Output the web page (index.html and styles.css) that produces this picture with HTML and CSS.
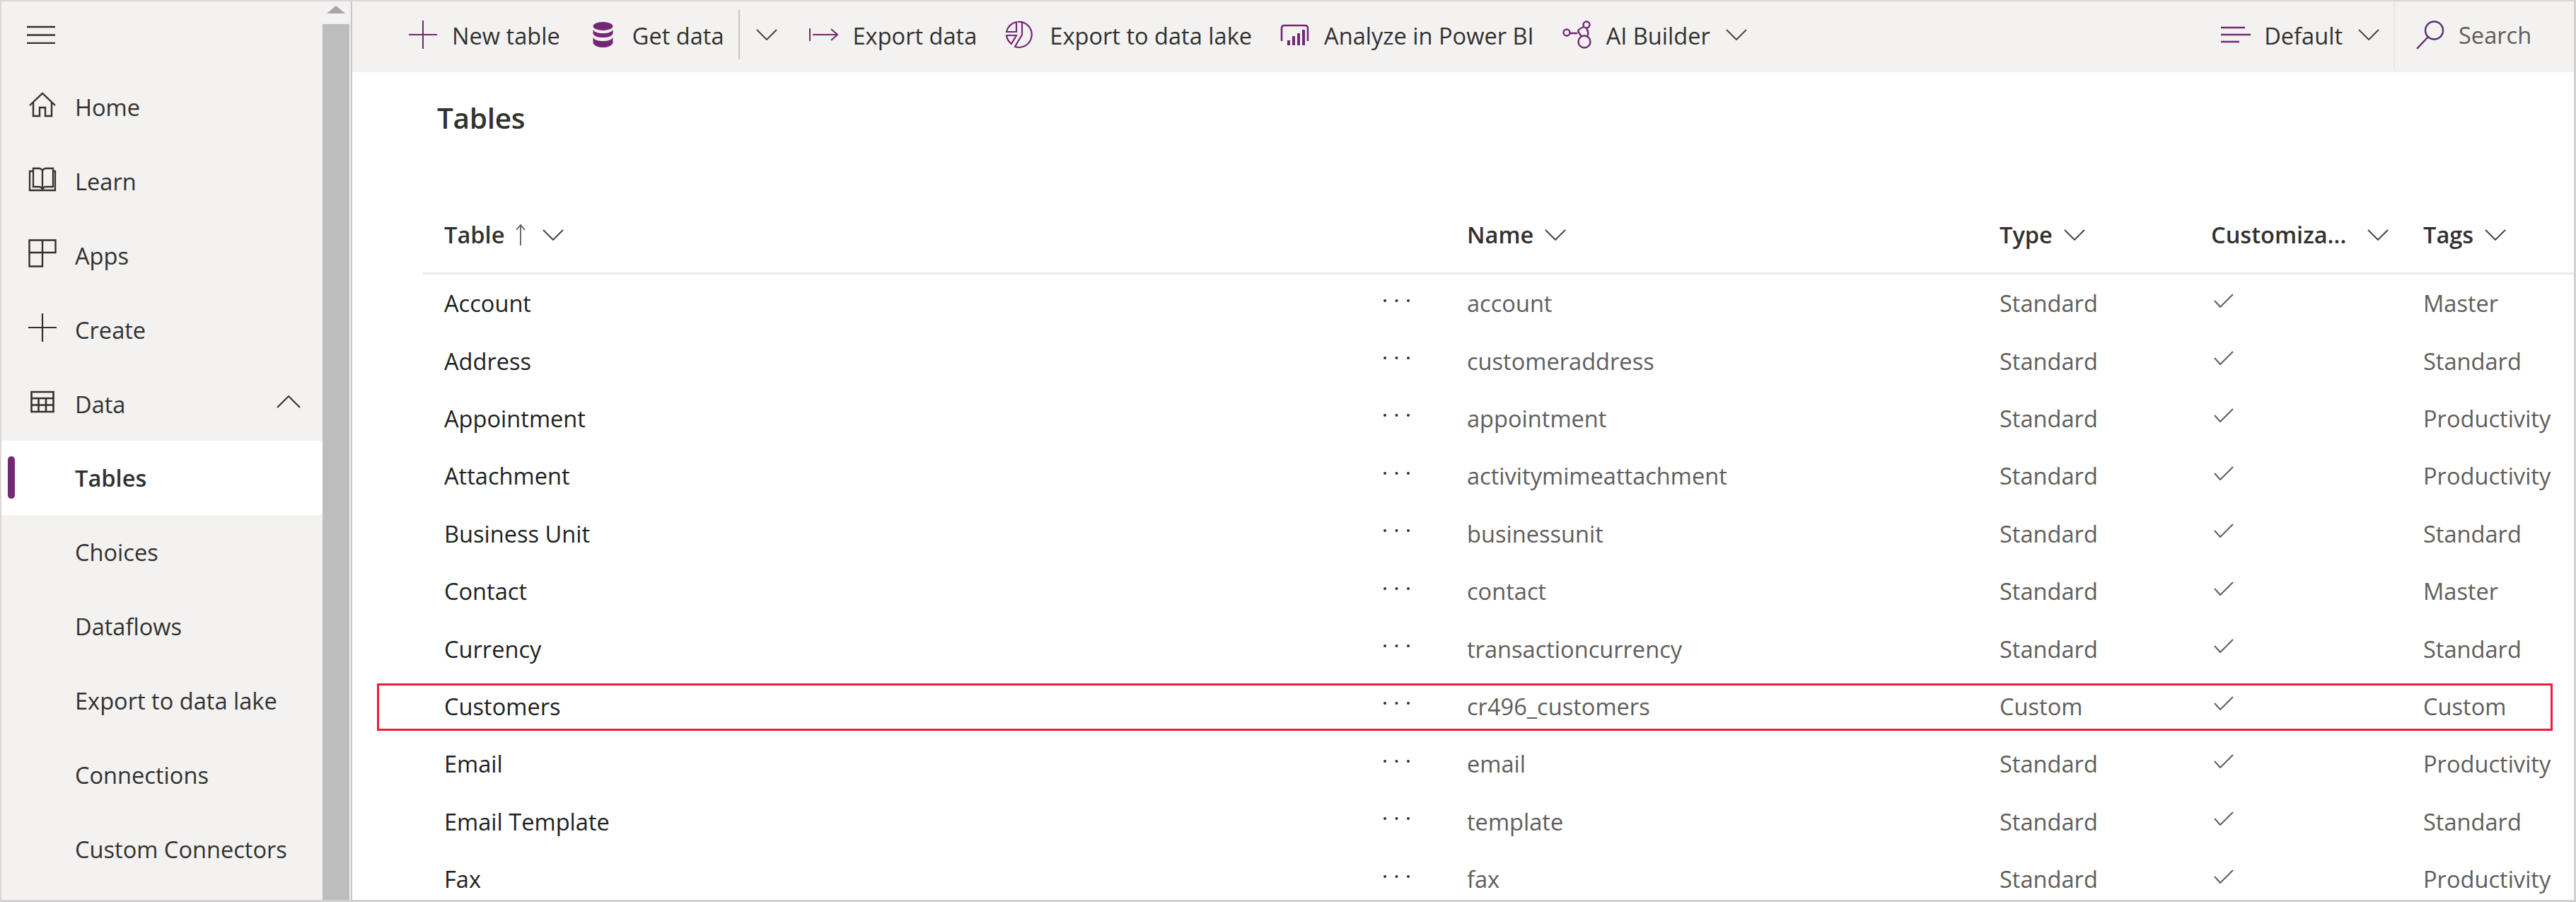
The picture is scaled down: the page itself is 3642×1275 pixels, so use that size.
FILE: index.html
```html
<!DOCTYPE html>
<html lang="en">
<head>
    <meta charset="UTF-8">
    <title>Tables</title>
    <link rel="stylesheet" href="styles.css">
</head>
<body>
<svg class="defs" width="0" height="0">
    <symbol id="chev" viewBox="0 0 30 16"><path d="M1 1 L15 15 L29 1" fill="none" stroke="currentColor" stroke-width="2"/></symbol>
    <symbol id="check" viewBox="0 0 28 20"><path d="M1 10 L9 19 L27 1" fill="none" stroke="currentColor" stroke-width="2"/></symbol>
    <symbol id="dots" viewBox="0 0 37 4"><circle cx="2" cy="2" r="2"/><circle cx="18.5" cy="2" r="2"/><circle cx="35" cy="2" r="2"/></symbol>
</svg>
<div class="app">
    <aside class="side">
        <nav class="nav">
            <div class="burger">
                <svg width="40" height="26" viewBox="0 0 40 26"><path d="M0 2H40M0 13.500H40M0 25H40" stroke="#323130" stroke-width="2.600"/></svg>
            </div>
            <a class="nav-item">
                <svg class="nav-icon" width="40" height="36" viewBox="0 0 40 36"><path d="M2 19 L20 2 L38 19M7 15V34H16V22H24V34H33V15" fill="none" stroke="#323130" stroke-width="2.400"/></svg>
                Home
            </a>
            <a class="nav-item">
                <svg class="nav-icon" width="40" height="36" viewBox="0 0 40 36"><path d="M7 3V29H15Q18 29 20 32Q22 29 25 29H35V3H25Q22 3 20 6Q18 3 15 3ZM20 6V32M7 7H2V34H38V7H35" fill="none" stroke="#323130" stroke-width="2.300"/></svg>
                Learn
            </a>
            <a class="nav-item">
                <svg class="nav-icon" width="40" height="40" viewBox="0 0 40 40"><path d="M1.500 1.500H38.500V19H20V38.500H1.500ZM20 1.500V19H1.500" fill="none" stroke="#323130" stroke-width="2.400"/></svg>
                Apps
            </a>
            <a class="nav-item">
                <svg class="nav-icon" width="40" height="40" viewBox="0 0 40 40"><path d="M0 20H40M20 0V40" stroke="#323130" stroke-width="2.200"/></svg>
                Create
            </a>
            <a class="nav-item">
                <svg class="nav-icon" width="40" height="32" viewBox="0 0 40 32"><path d="M4.500 2H35.500V30H4.500ZM4.500 11H35.500M4.500 20.500H35.500M14.500 11V30M25 11V30" fill="none" stroke="#323130" stroke-width="2.600"/></svg>
                Data
                <svg class="nav-up" width="34" height="18" viewBox="0 0 34 18"><path d="M1 17 L17 1 L33 17" fill="none" stroke="#323130" stroke-width="2"/></svg>
            </a>
            <a class="nav-item sub current"><span class="mark"></span>Tables</a>
            <a class="nav-item sub">Choices</a>
            <a class="nav-item sub">Dataflows</a>
            <a class="nav-item sub">Export to data lake</a>
            <a class="nav-item sub">Connections</a>
            <a class="nav-item sub">Custom Connectors</a>
        </nav>
        <div class="scroll">
            <svg class="scroll-up" width="26" height="11" viewBox="0 0 26 11"><path d="M13 0 L26 11 H0Z" fill="#a6a6a6"/></svg>
            <div class="thumb"></div>
        </div>
    </aside>

    <main class="main">
        <header class="toolbar">
            <a class="tool">
                <svg width="40" height="40" viewBox="0 0 40 40"><path d="M0 20H40M20 0V40" stroke="#742774" stroke-width="2"/></svg>
                New table
            </a>
            <a class="tool tool-data">
                <svg width="29" height="36" viewBox="0 0 29 36" fill="#742774"><ellipse cx="14.500" cy="6" rx="14" ry="6"/><path d="M0.500 11C3 15 8 16 14.500 16S26 15 28.500 11V17C26 21 21 22 14.500 22S3 21 0.500 17Z"/><path d="M0.500 22C3 26 8 27 14.500 27S26 26 28.500 22V30C26 34 21 36 14.500 36S3 34 0.500 30Z"/></svg>
                Get data
            </a>
            <span class="tool-sep"></span>
            <svg class="chev tool-chev" width="30" height="16"><use href="#chev"/></svg>
            <a class="tool tool-near">
                <svg width="41" height="18" viewBox="0 0 41 18"><path d="M1 0V18M5 9H40M31 1 L40 9 L31 17" fill="none" stroke="#742774" stroke-width="2"/></svg>
                Export data
            </a>
            <a class="tool tool-near">
                <svg width="42" height="40" viewBox="0 0 42 40"><path d="M18 2A18 18 0 1 1 14 37L24 20V2ZM2 16A18 18 0 0 1 16 2V16ZM2 21H16L9 33A18 18 0 0 1 2 21Z" fill="none" stroke="#742774" stroke-width="2.200"/></svg>
                Export to data lake
            </a>
            <a class="tool tool-near">
                <svg width="41" height="30" viewBox="0 0 41 30"><path d="M2 24V6Q2 2 6 2H35Q39 2 39 6V24" fill="none" stroke="#742774" stroke-width="2.600"/><path d="M10 23h4v7h-4ZM17 17h4v13h-4ZM24 13h4v17h-4ZM31 8h4v22h-4Z" fill="#742774"/></svg>
                Analyze in Power BI
            </a>
            <a class="tool tool-ai">
                <svg width="42" height="40" viewBox="0 0 42 40" fill="none" stroke="#742774" stroke-width="2.400"><circle cx="6" cy="17" r="4.500"/><circle cx="34" cy="6" r="4.500"/><circle cx="31" cy="30" r="8.500"/><path d="M30 9Q20 13 23 17Q25 20 27 22M10 18H21M34 11Q38 17 35 23"/></svg>
                AI Builder
            </a>
            <svg class="chev" width="30" height="16"><use href="#chev"/></svg>
            <div class="tool-right">
                <a class="tool tool-default">
                    <svg width="42" height="24" viewBox="0 0 42 24"><path d="M0 2H34M0 12H42M0 22H26" stroke="#742774" stroke-width="2.600"/></svg>
                    Default
                </a>
                <svg class="chev tool-chev-def" width="30" height="16"><use href="#chev"/></svg>
                <div class="search">
                    <svg width="40" height="40" viewBox="0 0 40 40"><circle cx="25.500" cy="14" r="12.500" fill="none" stroke="#5c2d6e" stroke-width="2.400"/><path d="M17 23 L1 40" stroke="#5c2d6e" stroke-width="2.400"/></svg>
                    Search
                </div>
            </div>
        </header>

        <h1 class="title">Tables</h1>

        <section class="grid">
            <div class="row head">
                <div class="cell">Table
                    <svg class="sort" width="14" height="30" viewBox="0 0 14 30"><path d="M7 30V1M1 8 L7 1 L13 8" fill="none" stroke="#605e5c" stroke-width="1.800"/></svg>
                    <svg class="chev" width="30" height="16"><use href="#chev"/></svg>
                </div>
                <div></div>
                <div class="cell">Name <svg class="chev" width="30" height="16"><use href="#chev"/></svg></div>
                <div class="cell">Type <svg class="chev" width="30" height="16"><use href="#chev"/></svg></div>
                <div class="cell cell-wide">Customiza... <svg class="chev" width="30" height="16"><use href="#chev"/></svg></div>
                <div class="cell">Tags <svg class="chev" width="30" height="16"><use href="#chev"/></svg></div>
            </div>

            <div class="row">
                <div class="main-col">Account</div>
                <svg class="dots" width="37" height="4"><use href="#dots"/></svg>
                <div>account</div><div>Standard</div>
                <svg class="check" width="28" height="20"><use href="#check"/></svg>
                <div>Master</div>
            </div>
            <div class="row">
                <div class="main-col">Address</div>
                <svg class="dots" width="37" height="4"><use href="#dots"/></svg>
                <div>customeraddress</div><div>Standard</div>
                <svg class="check" width="28" height="20"><use href="#check"/></svg>
                <div>Standard</div>
            </div>
            <div class="row">
                <div class="main-col">Appointment</div>
                <svg class="dots" width="37" height="4"><use href="#dots"/></svg>
                <div>appointment</div><div>Standard</div>
                <svg class="check" width="28" height="20"><use href="#check"/></svg>
                <div>Productivity</div>
            </div>
            <div class="row">
                <div class="main-col">Attachment</div>
                <svg class="dots" width="37" height="4"><use href="#dots"/></svg>
                <div>activitymimeattachment</div><div>Standard</div>
                <svg class="check" width="28" height="20"><use href="#check"/></svg>
                <div>Productivity</div>
            </div>
            <div class="row">
                <div class="main-col">Business Unit</div>
                <svg class="dots" width="37" height="4"><use href="#dots"/></svg>
                <div>businessunit</div><div>Standard</div>
                <svg class="check" width="28" height="20"><use href="#check"/></svg>
                <div>Standard</div>
            </div>
            <div class="row">
                <div class="main-col">Contact</div>
                <svg class="dots" width="37" height="4"><use href="#dots"/></svg>
                <div>contact</div><div>Standard</div>
                <svg class="check" width="28" height="20"><use href="#check"/></svg>
                <div>Master</div>
            </div>
            <div class="row">
                <div class="main-col">Currency</div>
                <svg class="dots" width="37" height="4"><use href="#dots"/></svg>
                <div>transactioncurrency</div><div>Standard</div>
                <svg class="check" width="28" height="20"><use href="#check"/></svg>
                <div>Standard</div>
            </div>
            <div class="row">
                <div class="main-col">Customers</div>
                <svg class="dots" width="37" height="4"><use href="#dots"/></svg>
                <div>cr496_customers</div><div>Custom</div>
                <svg class="check" width="28" height="20"><use href="#check"/></svg>
                <div>Custom</div>
                <span class="callout"></span>
            </div>
            <div class="row">
                <div class="main-col">Email</div>
                <svg class="dots" width="37" height="4"><use href="#dots"/></svg>
                <div>email</div><div>Standard</div>
                <svg class="check" width="28" height="20"><use href="#check"/></svg>
                <div>Productivity</div>
            </div>
            <div class="row">
                <div class="main-col">Email Template</div>
                <svg class="dots" width="37" height="4"><use href="#dots"/></svg>
                <div>template</div><div>Standard</div>
                <svg class="check" width="28" height="20"><use href="#check"/></svg>
                <div>Standard</div>
            </div>
            <div class="row">
                <div class="main-col">Fax</div>
                <svg class="dots" width="37" height="4"><use href="#dots"/></svg>
                <div>fax</div><div>Standard</div>
                <svg class="check" width="28" height="20"><use href="#check"/></svg>
                <div>Productivity</div>
            </div>
        </section>
    </main>
</div>
</body>
</html>
```
FILE: styles.css
```css
html, body {
    margin: 0;
    padding: 0;
    height: 100%;
    overflow: hidden;
}

body {
    font-family: "Open Sans", "Noto Sans", sans-serif;
    font-size: 32.6px;
    color: #323130;
    background: #fff;
}

.defs {
    position: absolute;
}

svg {
    flex: none;
}

.app {
    display: flex;
    box-sizing: border-box;
    height: 100vh;
    border-top: 2px solid #ddd6d6;
    border-left: 2px solid #ddd6d6;
    border-right: 3px solid #d2d0d0;
    border-bottom: 3px solid #d2d0d0;
    overflow: hidden;
}

/* left side */
.side {
    display: flex;
    flex: none;
    width: 496px;
    box-sizing: border-box;
    background: #f3f2f1;
    border-right: 2px solid #c8c6c4;
}

.nav {
    width: 454px;
    flex: none;
}

.burger {
    display: flex;
    align-items: center;
    height: 97px;
    padding-left: 36px;
    padding-bottom: 3px;
    box-sizing: border-box;
}

.nav-item {
    display: flex;
    position: relative;
    align-items: center;
    height: 104.9px;
    padding-left: 38px;
    box-sizing: border-box;
}

.nav-icon {
    margin-right: 26px;
    margin-bottom: 6px;
}

.nav-item.sub {
    padding-left: 104px;
}

.nav-up {
    margin-left: auto;
    margin-right: 31px;
    margin-bottom: 6px;
}

.current {
    background: #fff;
    font-weight: 600;
    border-radius: 0 5px 5px 0;
}

.mark {
    position: absolute;
    left: 9px;
    top: 22px;
    width: 10px;
    height: 60px;
    border-radius: 5px;
    background: #742774;
}

.scroll {
    width: 38px;
    flex: none;
    display: flex;
    flex-direction: column;
    align-items: center;
    padding-top: 6px;
    box-sizing: border-box;
}

.thumb {
    flex: 1;
    width: 38px;
    margin-top: 15px;
    background: #bdbdbd;
}

/* toolbar */
.main {
    flex: 1;
    min-width: 0;
}

.toolbar {
    display: flex;
    align-items: center;
    height: 100px;
    padding-left: 80px;
    box-sizing: border-box;
    background: #f3f2f1;
}

.toolbar > .chev {
    margin-bottom: 6px;
}

.tool {
    display: flex;
    align-items: center;
    gap: 21px;
    margin-right: 46px;
    margin-bottom: 4px;
    white-space: nowrap;
}

.tool svg {
    margin-bottom: 2px;
}

.tool-data {
    margin-right: 20px;
    gap: 27px;
}

.tool-near {
    margin-right: 40px;
}

.tool-ai {
    gap: 20px;
    margin-right: 22px;
}

.tool-sep {
    width: 2px;
    height: 70px;
    margin-right: 23px;
    margin-bottom: 6px;
    background: #c8c6c4;
}

.tool-chev {
    margin-right: 45px;
}

.chev {
    color: #484644;
}

.tool-right {
    display: flex;
    align-items: center;
    margin-left: auto;
    height: 100%;
}

.tool-default {
    gap: 19px;
    margin-right: 22px;
}

.tool-chev-def {
    margin-right: 20px;
    margin-bottom: 6px;
}

.search {
    display: flex;
    align-items: center;
    gap: 20px;
    width: 255px;
    height: 100%;
    box-sizing: border-box;
    padding-left: 30px;
    padding-bottom: 6px;
    border-left: 2px solid #e6e4e2;
    border-bottom-left-radius: 6px;
    color: #605e5c;
}

/* heading and table */
.title {
    margin: 0;
    height: 176px;
    box-sizing: border-box;
    padding: 40px 0 0 120px;
    font-size: 40.5px;
    line-height: 50px;
    font-weight: 600;
    letter-spacing: -0.3px;
}

.grid {
    margin-left: 100px;
}

.row {
    display: grid;
    position: relative;
    grid-template-columns: 1328px 118px 753px 299px 300px 1fr;
    align-items: center;
    height: 81.4px;
    padding-left: 30px;
    color: #605e5c;
    white-space: nowrap;
}

.row.head {
    height: 110px;
    box-sizing: border-box;
    border-bottom: 3px solid #edebe9;
    color: #323130;
    font-weight: 600;
}

.cell {
    display: flex;
    align-items: center;
    gap: 16px;
}

.cell-wide {
    gap: 30px;
}

.sort {
    margin-right: 8px;
}

.main-col {
    color: #201f1e;
}

.dots {
    fill: #323130;
    margin-bottom: 8px;
}

.check {
    color: #605e5c;
    margin-bottom: 8px;
    margin-left: 4px;
}

.callout {
    position: absolute;
    left: -65px;
    right: 30px;
    top: 8px;
    height: 67px;
    box-sizing: border-box;
    border: 3px solid #ee1c3e;
}
```
